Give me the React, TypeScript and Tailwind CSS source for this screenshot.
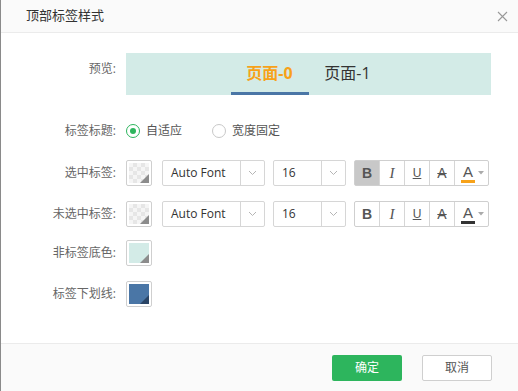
import React from "react";

const font = { fontFamily: '"Open Sans", "Noto Sans CJK SC", sans-serif' };

function Checker() {
  return (
    <div className="relative w-[26px] h-[26px] border border-[#cfcfcf] rounded-[2px] p-[2px] bg-white shrink-0">
      <div
        className="relative w-full h-full overflow-hidden"
        style={{
          backgroundColor: "#f5f5f5",
          backgroundImage:
            "linear-gradient(45deg,#e6e6e6 25%,transparent 25%,transparent 75%,#e6e6e6 75%),linear-gradient(45deg,#e6e6e6 25%,transparent 25%,transparent 75%,#e6e6e6 75%)",
          backgroundSize: "8px 8px",
          backgroundPosition: "0 0,4px 4px",
        }}
      >
        <svg className="absolute right-0 bottom-0" width="9" height="9" viewBox="0 0 9 9">
          <polygon points="9,0 9,9 0,9" fill="#8c8c8c" />
        </svg>
      </div>
    </div>
  );
}

function ColorBox({ color, corner }: { color: string; corner: string }) {
  return (
    <div className="w-[26px] h-[26px] border border-[#cfcfcf] rounded-[2px] p-[2px] bg-white shrink-0">
      <div className="relative w-full h-full" style={{ backgroundColor: color }}>
        <svg className="absolute right-0 bottom-0" width="9" height="9" viewBox="0 0 9 9">
          <polygon points="9,0 9,9 0,9" fill={corner} />
        </svg>
      </div>
    </div>
  );
}

function Chevron() {
  return (
    <svg width="9" height="6" viewBox="0 0 9 6">
      <polyline points="1,1 4.5,4.5 8,1" fill="none" stroke="#b5b5b5" strokeWidth="1" />
    </svg>
  );
}

function Select({ text, w, tw }: { text: string; w: string; tw: string }) {
  return (
    <div className={`flex h-[26px] border border-[#d6d6d6] rounded-[2px] bg-white shrink-0 ${w}`}>
      <div className={`flex items-center pl-[8px] text-[12px] text-[#333] ${tw}`}>{text}</div>
      <div className="flex-1 flex items-center justify-center border-l border-[#d6d6d6]">
        <Chevron />
      </div>
    </div>
  );
}

function StyleGroup({ bold, barColor }: { bold: boolean; barColor: string }) {
  return (
    <div className="flex h-[26px] border border-[#cfcfcf] rounded-[2px] bg-white text-[#555] shrink-0">
      <div
        className={`w-[25px] flex items-center justify-center border-r border-[#d6d6d6] text-[14px] font-bold ${
          bold ? "bg-[#c8c8c8]" : ""
        }`}
        style={{ fontFamily: '"Liberation Sans", sans-serif' }}
      >
        B
      </div>
      <div
        className="w-[25px] flex items-center justify-center border-r border-[#d6d6d6] text-[15px] italic"
        style={{ fontFamily: '"Liberation Serif", serif' }}
      >
        I
      </div>
      <div
        className="w-[25px] flex items-center justify-center border-r border-[#d6d6d6] text-[12px] underline"
        style={{ fontFamily: '"Liberation Sans", sans-serif' }}
      >
        U
      </div>
      <div
        className="w-[25px] flex items-center justify-center border-r border-[#d6d6d6] text-[14px] line-through"
        style={{ fontFamily: '"Liberation Sans", sans-serif' }}
      >
        A
      </div>
      <div className="w-[33px] flex items-center pl-[6px]">
        <div className="flex flex-col items-center">
          <span
            className="text-[15px] leading-[15px] text-[#555]"
            style={{ fontFamily: '"Liberation Sans", sans-serif' }}
          >
            A
          </span>
          <div className="w-[14px] h-[3px] mt-[1px]" style={{ backgroundColor: barColor }} />
        </div>
        <svg className="ml-[3px]" width="6" height="4" viewBox="0 0 6 4">
          <polygon points="0,0 6,0 3,3.5" fill="#aaa" />
        </svg>
      </div>
    </div>
  );
}

function Label({ children }: { children: React.ReactNode }) {
  return <div className="w-[115px] text-right text-[12px] text-[#666] shrink-0 mr-[10px]">{children}</div>;
}

function FontRow({ label, bold, barColor }: { label: string; bold: boolean; barColor: string }) {
  return (
    <div className="flex items-center">
      <Label>{label}</Label>
      <Checker />
      <div className="ml-[10px]">
        <Select text="Auto Font" w="w-[103px]" tw="w-[77px]" />
      </div>
      <div className="ml-[8px]">
        <Select text="16" w="w-[73px]" tw="w-[47px]" />
      </div>
      <div className="ml-[8px]">
        <StyleGroup bold={bold} barColor={barColor} />
      </div>
    </div>
  );
}

export default function App() {
  return (
    <div className="w-[518px] h-[391px] bg-white border-l border-[#8a8a8a] flex flex-col" style={font}>
      <div className="h-[33px] bg-[#fafafa] border-b border-[#ebebeb] flex items-center justify-between pl-[25px] pr-[10px] shrink-0">
        <span className="text-[13px] text-[#333]">顶部标签样式</span>
        <svg width="11" height="11" viewBox="0 0 11 11">
          <path d="M1 1L10 10M10 1L1 10" stroke="#999" strokeWidth="1.1" />
        </svg>
      </div>

      <div className="flex-1 pt-[20px]">
        <div className="flex">
          <Label>
            <div className="pt-[7px]">预览:</div>
          </Label>
          <div className="w-[365px] h-[42px] bg-[#d3ebe7] flex justify-center">
            <div className="flex items-stretch">
              <div className="w-[78px] flex flex-col items-center">
                <div className="flex-1 flex items-center text-[16px] font-bold text-[#f7a21a] pt-[1px]">页面-0</div>
                <div className="w-full h-[3px] bg-[#4a76a6]" />
              </div>
              <div className="w-[78px] flex flex-col items-center">
                <div className="flex-1 flex items-center text-[16px] text-[#333] pt-[1px]">页面-1</div>
                <div className="w-full h-[3px]" />
              </div>
            </div>
          </div>
        </div>

        <div className="flex items-center mt-[26px] h-[20px]">
          <Label>标签标题:</Label>
          <div className="flex items-center text-[12px] text-[#555]">
            <div className="w-[14px] h-[14px] rounded-full border border-[#2db55d] flex items-center justify-center">
              <div className="w-[6px] h-[6px] rounded-full bg-[#2db55d]" />
            </div>
            <span className="ml-[6px]">自适应</span>
            <div className="ml-[30px] w-[14px] h-[14px] rounded-full border border-[#c8c8c8]" />
            <span className="ml-[6px]">宽度固定</span>
          </div>
        </div>

        <div className="mt-[19px]">
          <FontRow label="选中标签:" bold={true} barColor="#f7a21a" />
        </div>
        <div className="mt-[15px]">
          <FontRow label="未选中标签:" bold={false} barColor="#333" />
        </div>

        <div className="flex items-center mt-[13px]">
          <Label>非标签底色:</Label>
          <ColorBox color="#d3ebe7" corner="#8c8c8c" />
        </div>

        <div className="flex items-center mt-[15px]">
          <Label>标签下划线:</Label>
          <ColorBox color="#4a76a6" corner="#2a4566" />
        </div>
      </div>

      <div className="h-[48px] bg-[#fafafa] border-t border-[#ebebeb] flex items-center justify-end pr-[26px] gap-[20px] shrink-0">
        <button className="w-[70px] h-[26px] rounded-[2px] bg-[#2db55d] text-white text-[12px]">确定</button>
        <button className="w-[70px] h-[26px] rounded-[2px] bg-white border border-[#cfcfcf] text-[#555] text-[12px]">
          取消
        </button>
      </div>
    </div>
  );
}
